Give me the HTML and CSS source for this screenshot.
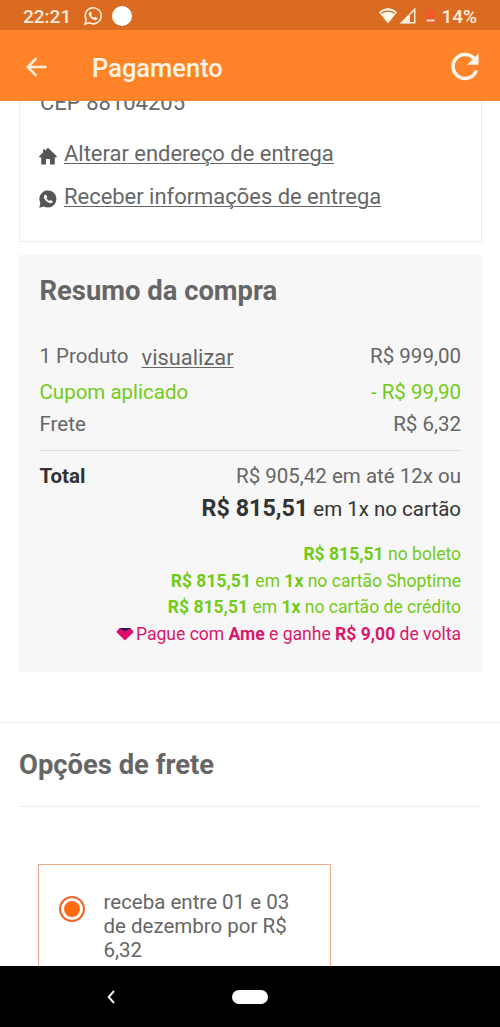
FILE: index.html
```html
<!DOCTYPE html>
<html lang="pt-BR">
<head>
<meta charset="utf-8">
<title>Pagamento</title>
<link rel="stylesheet" href="styles.css">
</head>
<body>
<div class="phone">
  <header class="status">
    <span class="clock">22:21</span>
    <svg class="wa" viewBox="0 0 20 20" width="20" height="20"><path d="M2 18 3.3 13.8A8 8 0 1 1 6.4 16.8Z" fill="none" stroke="#ffeed8" stroke-width="1.6"/><path d="M6.3 6.2 7.8 5.5 9 8 8.2 9.1Q9.2 11 11.1 11.8L12.2 10.8 14.6 12Q14.2 14.3 12 14.2C8.8 13.8 5.7 10.400 5.700 7.800Z" fill="#ffeed8"/></svg>
    <span class="dot"></span>
    <span class="grow"></span>
    <svg width="18" height="16" viewBox="0 0 18 16"><path d="M0 4.200Q9-3.500 18 4.200L9 15.500Z" fill="#fff6e8"/><path d="M2.300 5.300Q9 .8 15.700 5.300" fill="none" stroke="#c96a28" stroke-width="1.300"/></svg>
    <svg class="signal" width="17" height="16" viewBox="0 0 17 16"><path d="M2.500 14.700H15.700V1.300Z" fill="none" stroke="#fff1dd" stroke-width="1.500"/><path d="M1 15.300H11V6Z" fill="#fff1dd"/></svg>
    <svg class="battery" width="11" height="16" viewBox="0 0 11 16"><path d="M1 2.500H3.500V1H7.500V2.500H10V15H1Z" fill="#f4572e"/><path d="M3.500 5H7.500M3.500 8H7.500" stroke="#dc6a2a" stroke-width="1.500"/><path d="M1.500 12.500H9.500" stroke="#ffe4cf" stroke-width="2"/></svg>
    <span class="percent">14%</span>
  </header>
  <nav class="appbar">
    <svg width="22" height="20" viewBox="0 0 22 20"><path d="M20.500 10H2M10.500 1.200 1.700 10l8.800 8.800" fill="none" stroke="#fff0dd" stroke-width="2.500"/></svg>
    <h1>Pagamento</h1>
    <svg width="30" height="30" viewBox="0 0 30 30"><path d="M26.300 18.500A12 12 0 1 1 24 6.500" fill="none" stroke="#fff8ee" stroke-width="3.500"/><path d="M28.500 1.500V12.800H17Z" fill="#fff8ee"/></svg>
  </nav>
  <main class="content">
    <section class="address">
      <p class="cep">CEP 88104205</p>
      <p class="link"><svg width="18" height="18" viewBox="0 0 18 18"><path d="M9 .8 18 9.500 16.800 10.800 15.800 10V17.500H11V12H7V17.500H2.200V10L1.200 10.800 0 9.500 4 5.600V2.500H6V3.700Z" fill="#555"/></svg><a>Alterar endereço de entrega</a></p>
      <p class="link"><svg width="18" height="18" viewBox="0 0 18 18"><path d="M.3 17.700 1.400 13A8.500 8.500 0 1 1 5 16.500Z" fill="#555"/><path d="M5.400 5.300 6.800 4.500 8.300 7.100 7.400 8.200Q8.500 10.100 10.300 10.900L11.500 9.900 13.800 11.200Q13.400 13.500 11.300 13.200C8 12.600 4.800 9.300 4.800 7Z" fill="#fff"/></svg><a>Receber informações de entrega</a></p>
    </section>
    <section class="summary">
      <h2>Resumo da compra</h2>
      <div class="row product"><span class="label">1 Produto</span><a class="view">visualizar</a><span class="value">R$ 999,00</span></div>
      <div class="row coupon"><span class="label">Cupom aplicado</span><span class="value">- R$ 99,90</span></div>
      <div class="row freight"><span class="label">Frete</span><span class="value">R$ 6,32</span></div>
      <div class="row total"><b class="label">Total</b><span class="value">R$ 905,42 em até 12x ou</span></div>
      <div class="row cash"><span class="value"><b>R$ 815,51</b> em 1x no cartão</span></div>
      <ul class="offers">
        <li><span><b>R$ 815,51</b> no boleto</span></li>
        <li><span><b>R$ 815,51</b> em <b>1x</b> no cartão Shoptime</span></li>
        <li><span><b>R$ 815,51</b> em <b>1x</b> no cartão de crédito</span></li>
        <li class="ame"><svg width="18" height="14" viewBox="0 0 18 14"><path d="M3.500 1H14.500L17.700 5 9 13.500.3 5Z" fill="#df0b68"/><path d="M4 1H14L12.500 2.500 9 4.200 5.500 2.500Z" fill="#29165c"/></svg><span>Pague com <b>Ame</b> e ganhe <b>R$ 9,00</b> de volta</span></li>
      </ul>
    </section>
    <section class="shipping">
      <h2>Opções de frete</h2>
      <div class="option"><span class="radio"></span><p>receba entre 01 e 03<br>de dezembro por R$<br>6,32</p></div>
    </section>
  </main>
  <footer class="navbar">
    <svg width="8" height="14" viewBox="0 0 8 14"><path d="M7 1 1.700 7 7 13" fill="none" stroke="#eee" stroke-width="2"/></svg>
    <span class="pill"></span>
  </footer>
</div>
</body>
</html>
```
FILE: styles.css
```css
* { box-sizing: border-box; margin: 0; padding: 0; }
body { font-family: Roboto, sans-serif; color: #666; background: #fff; }
svg { display: block; flex: none; }
.phone { width: 500px; height: 1027px; display: flex; flex-direction: column; overflow: hidden; }
.status { height: 30px; flex: none; background: #db6b20; color: #ffeedb; display: flex; align-items: center; padding: 2px 23px 0; font-size: 19px; font-weight: 500; }
.clock { width: 48px; }
.wa { margin-left: 12px; }
.dot { width: 20px; height: 20px; margin-left: 9px; border-radius: 50%; background: #fff; }
.grow { flex: 1; }
.signal { margin-left: 2px; }
.battery { margin: 0 5px 0 9px; }
.appbar { height: 71px; flex: none; display: flex; align-items: center; padding: 2px 20px 0 26px; background: #ff8429; color: #fff3e5; }
.appbar h1 { flex: 1; margin-left: 44px; padding-top: 2px; font-size: 25.500px; line-height: 30px; font-weight: 500; }
.content { height: 865px; flex: none; overflow: hidden; }
.address { display: flow-root; height: 141px; margin: 0 18px 0 19px; padding: 0 20px; border: 1px solid #eee; border-top: 0; }
.cep { height: 43px; margin-top: -12px; font-size: 22px; line-height: 27px; }
.link { display: flex; align-items: center; gap: 7px; height: 43px; margin-left: -1px; font-size: 21.950px; line-height: 30px; }
.link svg { margin-top: 5px; }
.link a, .view { text-decoration: underline; text-decoration-thickness: 1px; text-underline-offset: 2px; }
.summary { height: 417px; margin: 13px 18px 0 19px; padding: 0 21px 0 20.500px; background: #f7f7f7; }
h2 { font-size: 27.400px; font-weight: 700; }
.summary h2 { height: 84px; line-height: 72px; }
.row { display: flex; font-size: 20.500px; }
.value { margin-left: auto; }
.product { height: 36px; line-height: 34px; }
.view { margin-left: 13px; padding-top: 2px; font-size: 21.900px; }
.coupon { height: 32px; line-height: 34px; color: #72cb16; }
.freight { height: 44px; line-height: 34px; border-bottom: 1px solid #ddd; }
.total { height: 32px; line-height: 50px; }
.total .label { color: #333; }
.cash { height: 58px; line-height: 50px; color: #333; }
.cash b { font-size: 23.300px; }
.offers { list-style: none; font-size: 17.550px; line-height: 26.600px; color: #72cb16; }
.offers li { display: flex; justify-content: flex-end; }
.offers .ame { color: #d9186c; align-items: center; gap: 2px; }
.shipping { margin-top: 50px; padding: 0 19px; border-top: 1px solid #eee; }
.shipping h2 { height: 84px; line-height: 84px; border-bottom: 1px solid #eee; }
.option { width: 293px; height: 190px; margin: 57px 0 0 19px; padding: 25px 0 0 20px; display: flex; gap: 18.500px; border: 1px solid #f0a98b; }
.radio { width: 26px; height: 26px; margin-top: 6px; flex: none; border: 2px solid #ec692d; border-radius: 50%; background: #ff6b10; box-shadow: inset 0 0 0 3px #fff; }
.option p { font-size: 20.500px; line-height: 24px; white-space: nowrap; }
.navbar { height: 61px; flex: none; display: flex; align-items: center; background: #000; padding-left: 107px; }
.pill { width: 36px; height: 14px; margin-left: 117px; border-radius: 7px; background: #fff; }
```
